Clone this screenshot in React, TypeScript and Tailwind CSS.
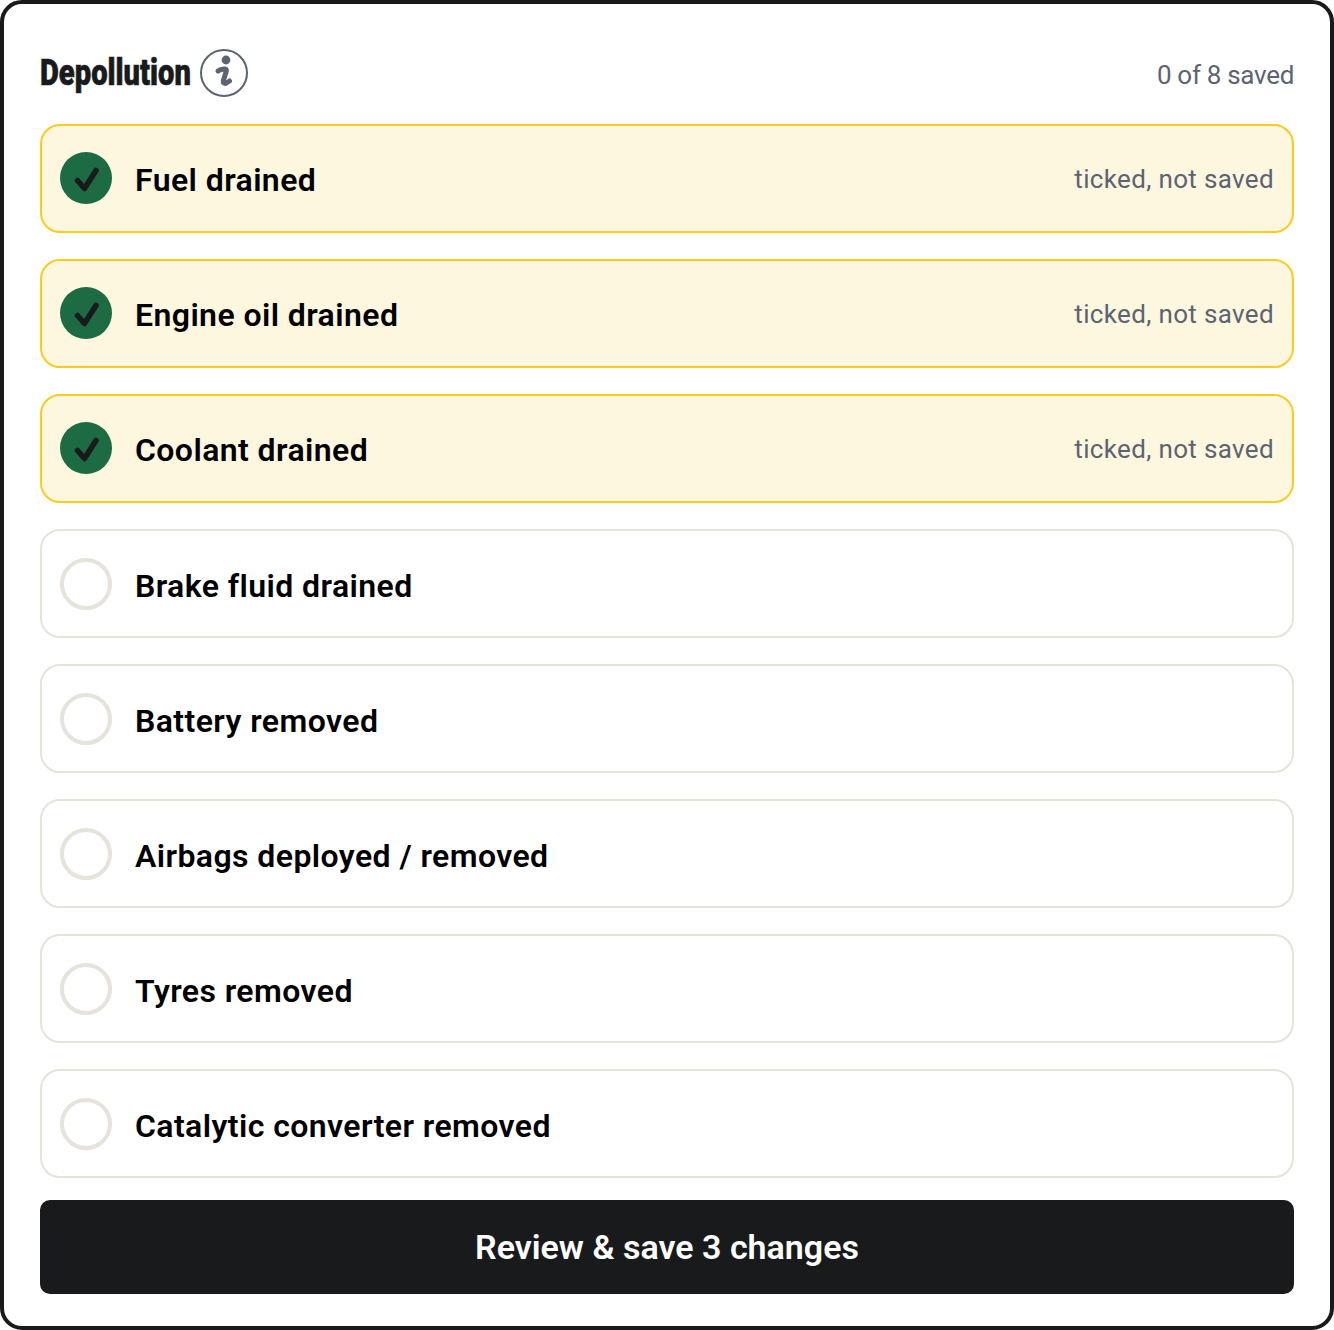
const items = [
  { label: 'Fuel drained', ticked: true },
  { label: 'Engine oil drained', ticked: true },
  { label: 'Coolant drained', ticked: true },
  { label: 'Brake fluid drained', ticked: false },
  { label: 'Battery removed', ticked: false },
  { label: 'Airbags deployed / removed', ticked: false },
  { label: 'Tyres removed', ticked: false },
  { label: 'Catalytic converter removed', ticked: false },
]

function InfoIcon() {
  return (
    <svg width="48" height="48" viewBox="0 0 48 48" fill="none">
      <circle cx="24" cy="24" r="23" stroke="#5b6470" strokeWidth="2" />
      <circle cx="26" cy="11" r="4.4" fill="#5b6470" />
      <path
        d="M18 22 C20 20.4 22.5 19.6 25 20 C26.4 20.2 26.6 21.2 26.2 22.4 L23.4 31.6 C22.8 34 24.6 35 26.4 34 L29.5 32"
        stroke="#5b6470"
        strokeWidth="5"
        strokeLinecap="round"
        strokeLinejoin="round"
      />
    </svg>
  )
}

function Tick({ ticked }: { ticked: boolean }) {
  if (!ticked) {
    return <div className="h-[52px] w-[52px] shrink-0 rounded-full border-[4px] border-[#e5e3da] bg-white" />
  }
  return (
    <div className="flex h-[52px] w-[52px] shrink-0 items-center justify-center rounded-full bg-[#1d6b43]">
      <svg width="52" height="52" viewBox="0 0 52 52" fill="none">
        <path
          d="M17.5 28.5 L24.5 36.5 L36 18.5"
          stroke="#191a1c"
          strokeWidth="5.5"
          strokeLinecap="round"
          strokeLinejoin="round"
        />
      </svg>
    </div>
  )
}

export default function App() {
  return (
    <div className="h-[1330px] w-[1334px] bg-white font-['Roboto',sans-serif]">
      <div className="flex h-full flex-col rounded-[22px] border-[4px] border-[#191a1c] px-[36px] pb-[32px] pt-[44px]">
        <div className="mb-[26px] flex h-[50px] items-center justify-between">
          <div className="flex items-center gap-[8px]">
            <h2 className="w-[152px] origin-left scale-x-[0.81] whitespace-nowrap text-[36px] font-black leading-none text-[#191a1c] [-webkit-text-stroke:0.6px_#191a1c]">
              Depollution
            </h2>
            <InfoIcon />
          </div>
          <span className="pt-[5px] text-[26px] tracking-[-0.3px] text-[#5b6470]">0 of 8 saved</span>
        </div>

        <div className="flex flex-col gap-[26.1px]">
          {items.map((item) => (
            <div
              key={item.label}
              className={
                item.ticked
                  ? 'flex h-[109px] items-center justify-between rounded-[20px] border-2 border-[#fdcb1f] bg-[#fef7e0] pl-[18px] pr-[18px]'
                  : 'flex h-[109px] items-center justify-between rounded-[20px] border-2 border-[#e5e3da] bg-white pl-[18px] pr-[18px]'
              }
            >
              <div className="flex items-center gap-[23px]">
                <Tick ticked={item.ticked} />
                <span className="pt-[4px] text-[32px] font-semibold leading-none tracking-[0.42px] text-black">
                  {item.label}
                </span>
              </div>
              {item.ticked ? (
                <span className="pt-[2px] text-[26px] tracking-[0.35px] text-[#5b6470]">ticked, not saved</span>
              ) : null}
            </div>
          ))}
        </div>

        <button className="mt-[22px] flex h-[94px] w-full items-center justify-center rounded-[10px] bg-[#191a1c] text-[34px] font-semibold text-white">
          Review &amp; save 3 changes
        </button>
      </div>
    </div>
  )
}
